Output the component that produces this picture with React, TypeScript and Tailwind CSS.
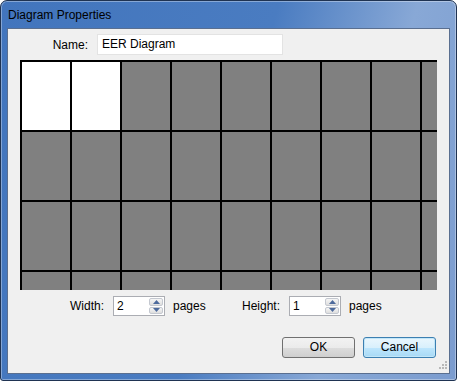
import React from "react";

const font = { fontFamily: '"Liberation Sans", Arial, sans-serif' };

function Spinner({ value }: { value: string }) {
  return (
    <div className="flex h-[20px] w-[52px] border border-[#abadb3] bg-white">
      <div className="flex-1 pl-[3px] text-[12px] leading-[18px] text-black">{value}</div>
      <div className="flex w-[15px] flex-col gap-px py-px pr-px">
        <div className="flex flex-1 items-center justify-center rounded-[2px] border border-[#c4c8d0] bg-[linear-gradient(#f6f6f6,#dedede)]">
          <svg width="7" height="4" viewBox="0 0 7 4"><path d="M0 4 L3.5 0 L7 4 Z" fill="#4d6a9c" /></svg>
        </div>
        <div className="flex flex-1 items-center justify-center rounded-[2px] border border-[#c4c8d0] bg-[linear-gradient(#f6f6f6,#dedede)]">
          <svg width="7" height="4" viewBox="0 0 7 4"><path d="M0 0 L3.5 4 L7 0 Z" fill="#4d6a9c" /></svg>
        </div>
      </div>
    </div>
  );
}

export default function App() {
  const cols = 10;
  const rows = 4;
  const cells = [];
  for (let r = 0; r < rows; r++) {
    for (let c = 0; c < cols; c++) {
      const white = r === 0 && c < 2;
      cells.push(
        <div
          key={r + "-" + c}
          className={
            "h-[70px] w-[50px] shrink-0 border-l-2 border-t-2 border-black " +
            (white ? "bg-white" : "bg-[#808080]")
          }
        />
      );
    }
  }

  return (
    <div style={font} className="h-[381px] w-[457px] overflow-hidden text-[12px] text-black">
      <div className="flex h-[381px] w-[457px] flex-col rounded-t-[7px] rounded-b-[3px] border border-[#1f3352] bg-[linear-gradient(105deg,#4275bd_0%,#4a7cc1_50%,#88a8d6_75%,#7b9ccf_100%)] shadow-[inset_0_0_0_1px_rgba(255,255,255,0.35)]">
        <div className="flex h-[27px] items-center pl-[7px] pt-[1px] text-[12px]">Diagram Properties</div>
        <div className="mx-[6px] h-[346px] border border-[#5a6f90] bg-[#f0f0f0]">
          {/* name row */}
          <div className="mt-[5px] flex items-center">
            <div className="w-[80px] text-right">Name:</div>
            <div className="ml-[9px] h-[21px] w-[186px] border border-[#e3e3e3] bg-white pl-[4px] leading-[19px]">EER Diagram</div>
          </div>
          {/* page grid */}
          <div className="ml-[12px] mt-[5px] h-[230px] w-[417px] overflow-hidden bg-[#808080]">
            <div className="flex w-[500px] flex-wrap">{cells}</div>
          </div>
          {/* size row */}
          <div className="mt-[6px] flex items-center">
            <div className="w-[96px] text-right">Width:</div>
            <div className="ml-[9px]"><Spinner value="2" /></div>
            <div className="ml-[8px] w-[60px]">pages</div>
            <div className="w-[47px] text-right">Height:</div>
            <div className="ml-[9px]"><Spinner value="1" /></div>
            <div className="ml-[8px]">pages</div>
          </div>
          {/* buttons */}
          <div className="mt-[21px] flex justify-end gap-[8px] pr-[13px]">
            <button className="h-[21px] w-[73px] rounded-[3px] border border-[#707070] bg-[linear-gradient(#f2f2f2_0%,#ebebeb_50%,#dddddd_51%,#cfcfcf_100%)] text-[12px] leading-[19px]">OK</button>
            <button className="h-[21px] w-[73px] rounded-[3px] border border-[#3c7fb1] bg-[linear-gradient(#eaf6fd_0%,#d9f0fc_50%,#bee6fd_51%,#a7d9f5_100%)] text-[12px] leading-[19px] shadow-[inset_0_0_0_1px_#c2e6f8]">Cancel</button>
          </div>
          {/* resize grip */}
          <div className="mr-[2px] mt-[3px] flex justify-end">
            <svg width="8" height="8" viewBox="0 0 8 8">
              <rect x="6" y="0" width="2" height="2" fill="#b8b8b8" />
              <rect x="3" y="3" width="2" height="2" fill="#b8b8b8" />
              <rect x="6" y="3" width="2" height="2" fill="#b8b8b8" />
              <rect x="0" y="6" width="2" height="2" fill="#b8b8b8" />
              <rect x="3" y="6" width="2" height="2" fill="#b8b8b8" />
              <rect x="6" y="6" width="2" height="2" fill="#b8b8b8" />
            </svg>
          </div>
        </div>
      </div>
    </div>
  );
}
